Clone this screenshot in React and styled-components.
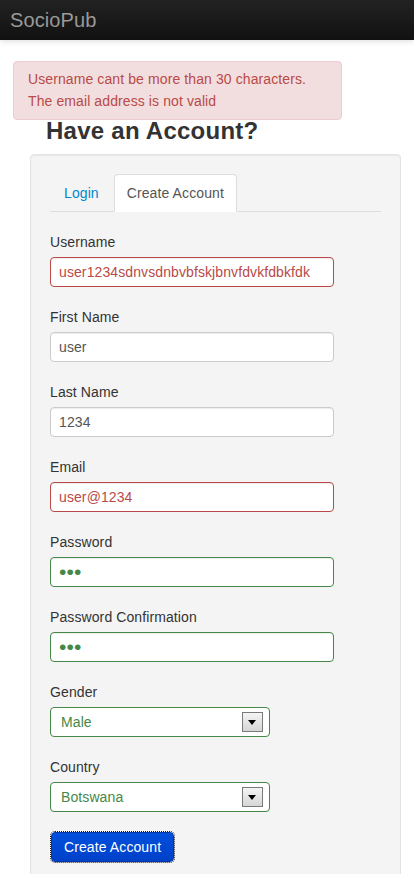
import React from "react";
import styled, { createGlobalStyle } from "styled-components";

const GlobalStyle = createGlobalStyle`
  body {
    margin: 0;
    background: #fff;
    font-family: "Liberation Sans", Arial, sans-serif;
    font-size: 14px;
    line-height: 20px;
    letter-spacing: 0.1px;
    color: #333;
  }
`;

const tone = {
  error: { border: "#b94a48", color: "#b94a48" },
  success: { border: "#468847", color: "#468847" },
  normal: { border: "#ccc", color: "#555" },
};

const App = () => {
  return (
    <>
      <GlobalStyle />
      <Navbar>
        <Brand>SocioPub</Brand>
      </Navbar>
      <Page>
        <Alert>
          Username cant be more than 30 characters.
          <br />
          The email address is not valid
        </Alert>
        <Heading>Have an Account?</Heading>
        <Well>
          <Tabs>
            <Tab>Login</Tab>
            <Tab $active>Create Account</Tab>
          </Tabs>
          <Form>
            <Group>
              <Label>Username</Label>
              <Input $state="error" defaultValue="user1234sdnvsdnbvbfskjbnvfdvkfdbkfdk" />
            </Group>
            <Group>
              <Label>First Name</Label>
              <Input $state="normal" defaultValue="user" />
            </Group>
            <Group>
              <Label>Last Name</Label>
              <Input $state="normal" defaultValue="1234" />
            </Group>
            <Group>
              <Label>Email</Label>
              <Input $state="error" defaultValue="user@1234" />
            </Group>
            <Group>
              <Label>Password</Label>
              <Input $state="success" type="password" defaultValue="abc" />
            </Group>
            <Group>
              <Label>Password Confirmation</Label>
              <Input $state="success" type="password" defaultValue="abc" />
            </Group>
            <Group>
              <Label>Gender</Label>
              <SelectWrap>
                <Select $state="success" defaultValue="Male">
                  <option>Male</option>
                  <option>Female</option>
                </Select>
                <Arrow />
              </SelectWrap>
            </Group>
            <Group>
              <Label>Country</Label>
              <SelectWrap>
                <Select $state="success" defaultValue="Botswana">
                  <option>Botswana</option>
                </Select>
                <Arrow />
              </SelectWrap>
            </Group>
            <Button type="button">Create Account</Button>
          </Form>
        </Well>
      </Page>
    </>
  );
};

export default App;

const Navbar = styled.header`
  height: 40px;
  display: flex;
  align-items: center;
  padding-left: 10px;
  background: linear-gradient(to bottom, #222, #111);
  box-shadow: 0 1px 6px rgba(0, 0, 0, 0.15);
`;

const Brand = styled.span`
  font-size: 20px;
  color: #999;
  line-height: 24px;
`;

const Page = styled.main`
  position: relative;
  padding: 76px 13px 0 30px;
`;

const Alert = styled.div`
  position: absolute;
  top: 21px;
  left: 13px;
  width: 299px;
  padding: 6px 14px 7px;
  background: #f2dede;
  border: 1px solid #ebccd1;
  border-radius: 4px;
  color: #b94a48;
  line-height: 22px;
`;

const Heading = styled.h2`
  margin: 0 0 8px 16px;
  font-size: 24px;
  line-height: 30px;
  font-weight: bold;
  letter-spacing: 0.25px;
  color: #333;
`;

const Well = styled.section`
  width: 331px;
  padding: 19px;
  background: #f4f4f4;
  border: 1px solid #e3e3e3;
  border-radius: 4px;
  box-shadow: inset 0 1px 1px rgba(0, 0, 0, 0.05);
`;

const Tabs = styled.ul`
  display: flex;
  margin: 0;
  padding: 0 0 0 1px;
  list-style: none;
  border-bottom: 1px solid #ddd;
`;

const Tab = styled.li`
  margin: 0 2px -1px 0;
  padding: 8px 12px;
  border: 1px solid ${(p) => (p.$active ? "#ddd" : "transparent")};
  border-bottom-color: transparent;
  border-radius: 4px 4px 0 0;
  background: ${(p) => (p.$active ? "#fff" : "transparent")};
  color: ${(p) => (p.$active ? "#555" : "#08c")};
`;

const Form = styled.form`
  padding-top: 20px;
`;

const Group = styled.div`
  margin-bottom: 20px;
`;

const Label = styled.label`
  display: block;
  margin-bottom: 5px;
  color: #333;
`;

const Input = styled.input`
  box-sizing: border-box;
  width: 284px;
  height: 30px;
  padding: 4px 8px;
  font-family: inherit;
  font-size: ${(p) => (p.type === "password" ? "21px" : "14px")};
  letter-spacing: inherit;
  color: ${(p) => tone[p.$state].color};
  border: 1px solid ${(p) => tone[p.$state].border};
  border-radius: 4px;
  background: #fff;
  box-shadow: inset 0 1px 1px rgba(0, 0, 0, 0.075);
  outline: none;
`;

const SelectWrap = styled.div`
  position: relative;
  width: 220px;
`;

const Select = styled.select`
  box-sizing: border-box;
  appearance: none;
  width: 220px;
  height: 30px;
  padding: 4px 10px;
  font-family: inherit;
  font-size: 14px;
  letter-spacing: inherit;
  color: ${(p) => tone[p.$state].color};
  border: 1px solid ${(p) => tone[p.$state].border};
  border-radius: 4px;
  background: #fff;
  outline: none;
`;

const Arrow = styled.span`
  position: absolute;
  top: 5px;
  right: 7px;
  width: 19px;
  height: 18px;
  border: 1px solid #7a7a7a;
  background: linear-gradient(to bottom, #f4f4f4, #d6d6d6);
  pointer-events: none;

  &::after {
    content: "";
    position: absolute;
    left: 5px;
    top: 7px;
    border-left: 4.5px solid transparent;
    border-right: 4.5px solid transparent;
    border-top: 5px solid #000;
  }
`;

const Button = styled.button`
  display: block;
  height: 30px;
  padding: 4px 12px;
  margin-left: 1px;
  font-family: inherit;
  font-size: 14px;
  line-height: 20px;
  letter-spacing: inherit;
  color: #fff;
  background: linear-gradient(to bottom, #0050dd, #0040c8);
  border: 1px solid #0038a8;
  border-radius: 4px;
  outline: 1px dotted #222;
  outline-offset: 0;
`;
